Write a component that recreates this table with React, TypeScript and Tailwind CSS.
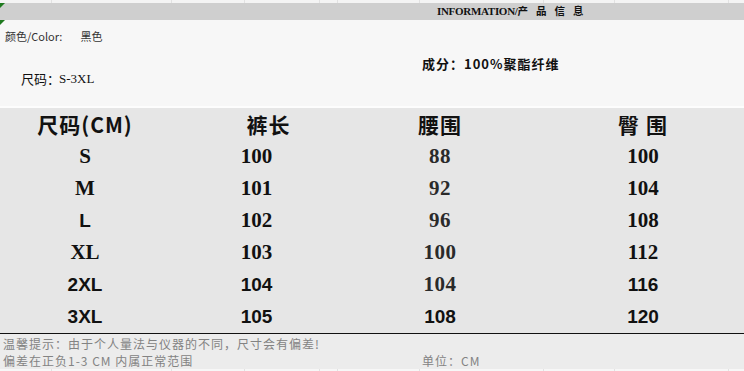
import React from "react";

const cjk = { fontFamily: '"Noto Sans CJK SC", "Noto Sans", sans-serif' };
const serif = { fontFamily: '"Liberation Serif", "Noto Sans CJK SC", serif' };
const sans = { fontFamily: '"Liberation Sans", "Noto Sans CJK SC", sans-serif' };

type Cell = { t: string; f: "serif" | "sans" | "mid" };

const rows: Cell[][] = [
  [{ t: "S", f: "serif" }, { t: "100", f: "serif" }, { t: "88", f: "mid" }, { t: "100", f: "serif" }],
  [{ t: "M", f: "serif" }, { t: "101", f: "serif" }, { t: "92", f: "mid" }, { t: "104", f: "serif" }],
  [{ t: "L", f: "sans" }, { t: "102", f: "serif" }, { t: "96", f: "mid" }, { t: "108", f: "serif" }],
  [{ t: "XL", f: "serif" }, { t: "103", f: "serif" }, { t: "100", f: "mid" }, { t: "112", f: "serif" }],
  [{ t: "2XL", f: "sans" }, { t: "104", f: "sans" }, { t: "104", f: "mid" }, { t: "116", f: "sans" }],
  [{ t: "3XL", f: "sans" }, { t: "105", f: "sans" }, { t: "108", f: "sans" }, { t: "120", f: "sans" }],
];

const widths = ["w-[170px]", "w-[173px]", "w-[194px]", "flex-1 pl-[5px]"];

function Val({ c }: { c: Cell }) {
  if (c.f === "sans")
    return (
      <span style={sans} className="text-[19px] font-bold text-[#111]">
        {c.t}
      </span>
    );
  if (c.f === "mid")
    return (
      <span style={serif} className="text-[21px] font-bold text-[#2a2a2a] tracking-[0.5px]">
        {c.t}
      </span>
    );
  return (
    <span style={serif} className="text-[21px] font-bold text-[#111]">
      {c.t}
    </span>
  );
}

function GridStrip({ h, bg }: { h: string; bg: string }) {
  const cols = [52, 120, 73, 75, 18, 82, 124, 71, 114];
  return (
    <div className={`flex ${h} ${bg}`}>
      {cols.map((w, i) => (
        <div key={i} style={{ width: w }} className="h-full border-r border-[#e2e2e2]" />
      ))}
      <div className="flex-1" />
    </div>
  );
}

export default function App() {
  return (
    <div className="relative w-[744px] h-[371px] overflow-hidden bg-white" style={cjk}>
      <GridStrip h="h-[3px]" bg="bg-[#f4f4f4]" />
      {/* title bar */}
      <div className="h-[17px] bg-[#cfcfcf] flex items-center">
        <div className="pl-[437px] flex items-center font-bold text-[#111] leading-none">
          <span style={serif} className="text-[11px] tracking-[-0.3px]">INFORMATION/</span>
          <span style={cjk} className="tracking-[8px] text-[10.5px]">产品信息</span>
        </div>
      </div>
      {/* info area */}
      <div className="h-[86px] bg-[#f7f7f7] relative">
        <div className="absolute left-[5px] top-[11px] text-[11px] text-[#333] leading-none" style={cjk}>
          颜色/Color:<span className="ml-[18px]">黑色</span>
        </div>
        <div className="absolute left-[21px] top-[52px] text-[13px] text-[#111] leading-none flex items-center">
          <span style={cjk}>尺码：</span>
          <span style={serif} className="-ml-[1px] text-[13px]">S-3XL</span>
        </div>
        <div
          className="absolute left-[422px] top-[37px] text-[13px] font-bold text-[#111] leading-none tracking-[1px]"
          style={cjk}
        >
          成分：100%聚酯纤维
        </div>
      </div>
      <div className="h-[2px] bg-[#fdfdfd]" />
      {/* table */}
      <div className="bg-[#e6e6e6] pt-[1px] border-b-[1.5px] border-[#111]">
        <div className="flex h-[32px] items-center">
          <div className={`${widths[0]} flex justify-center`}>
            <span className="text-[21px] font-bold text-[#111] tracking-[1px]" style={cjk}>
              尺码(CM)
            </span>
          </div>
          <div className={`${widths[1]} flex justify-center pl-[24px]`}>
            <span className="text-[21px] font-bold text-[#111] tracking-[1px]" style={cjk}>
              裤长
            </span>
          </div>
          <div className={`${widths[2]} flex justify-center`}>
            <span className="text-[21px] font-bold text-[#111] tracking-[1px]" style={cjk}>
              腰围
            </span>
          </div>
          <div className={`${widths[3]} flex justify-center`}>
            <span className="text-[21px] font-bold text-[#111] tracking-[1px]" style={cjk}>
              臀 围
            </span>
          </div>
        </div>
        {rows.map((r, i) => (
          <div key={i} className="flex h-[32px] items-center">
            {r.map((c, j) => (
              <div key={j} className={`${widths[j]} flex justify-center`}>
                <Val c={c} />
              </div>
            ))}
          </div>
        ))}
      </div>
      {/* footer */}
      <div
        className="h-[35px] bg-[#ececec] pl-[3px] pt-[1px] text-[12px] leading-[17px] text-[#838383] tracking-[1px]"
        style={cjk}
      >
        <div className="h-[17px] flex items-center">温馨提示：由于个人量法与仪器的不同，尺寸会有偏差!</div>
        <div className="flex h-[17px] items-center">
          <span className="w-[419px]">偏差在正负1-3 CM 内属正常范围</span>
          <span>单位：CM</span>
        </div>
      </div>
      <GridStrip h="h-[3px]" bg="bg-[#f7f7f7]" />
      {/* comment markers */}
      <div className="absolute left-0 top-[3px] w-0 h-0 border-t-[5px] border-t-[#1f7a1f] border-r-[5px] border-r-transparent" />
      <div className="absolute left-0 top-[20px] w-0 h-0 border-t-[5px] border-t-[#1f7a1f] border-r-[5px] border-r-transparent" />
    </div>
  );
}
